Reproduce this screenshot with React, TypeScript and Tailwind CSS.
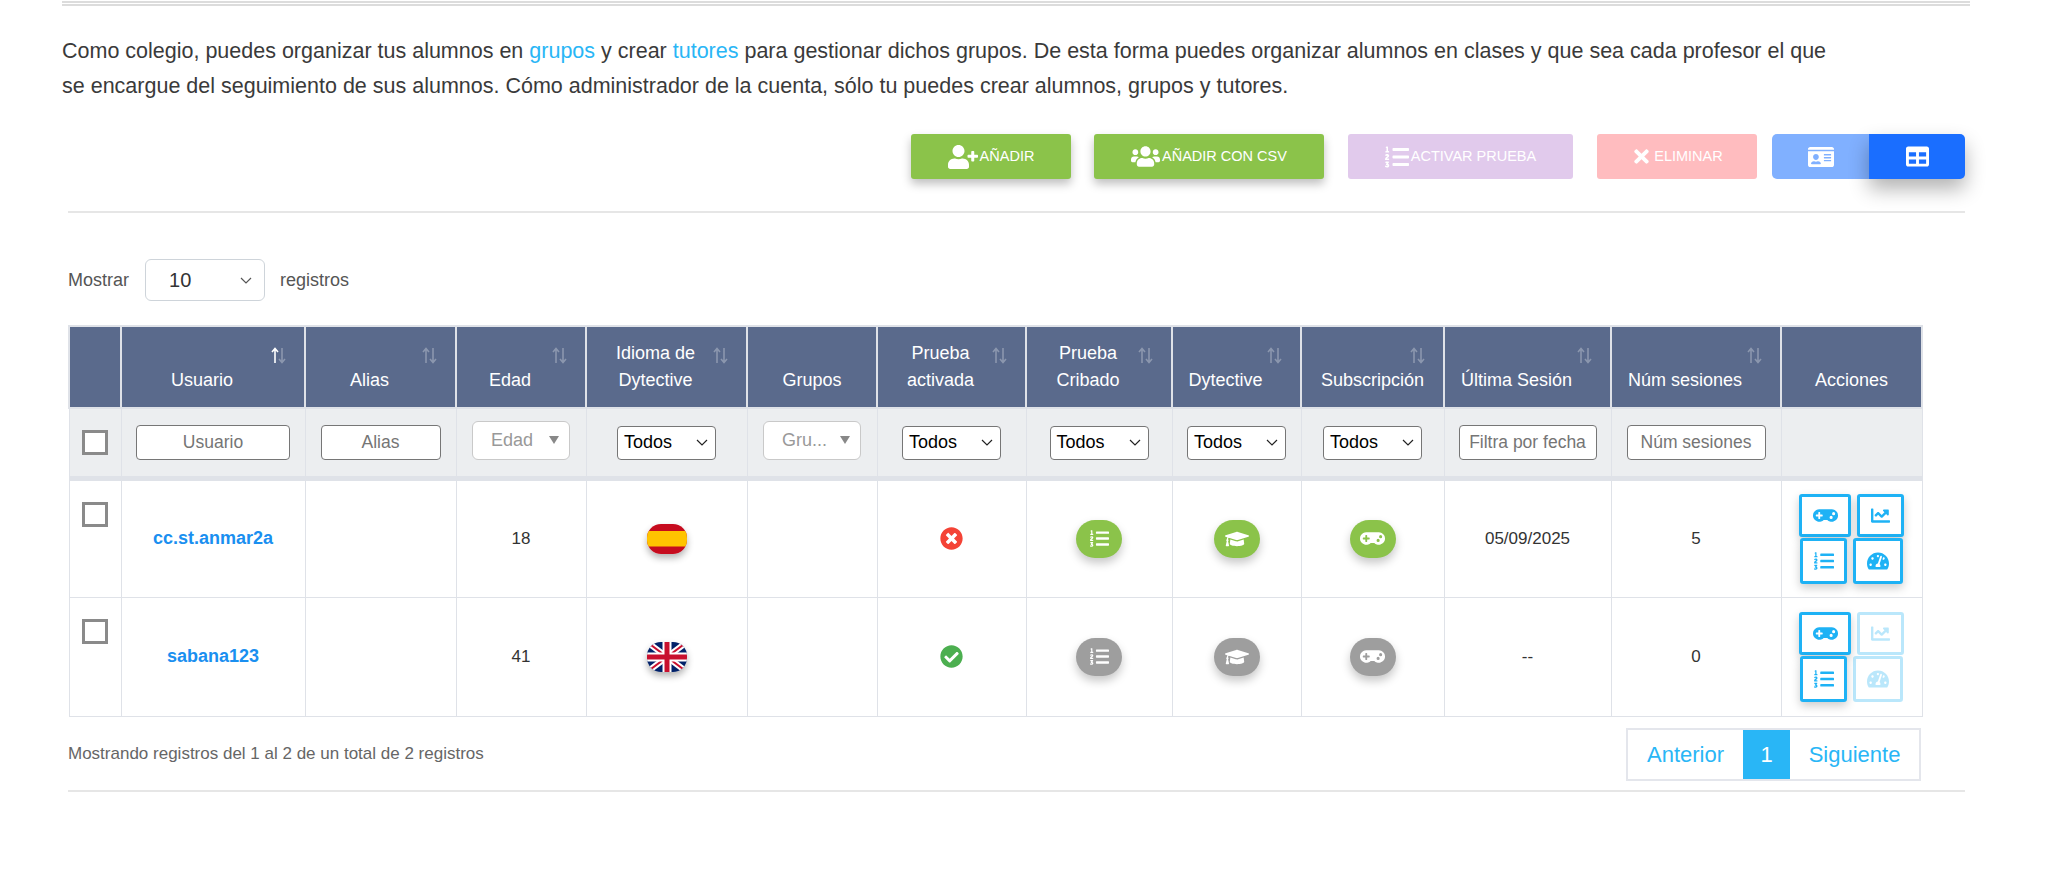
import type { ReactNode } from "react";
import {
  FaChartLine,
  FaCheckCircle,
  FaGamepad,
  FaGraduationCap,
  FaIdCard,
  FaListOl,
  FaTable,
  FaTachometerAlt,
  FaTimes,
  FaTimesCircle,
  FaUserPlus,
  FaUsers,
} from "react-icons/fa";

/* ── Table columns ── */

const COLUMNS = [
  { w: "w-[52px]", label: "", sort: false },
  { w: "w-[184px]", label: "Usuario", sort: true, active: true },
  { w: "w-[151px]", label: "Alias", sort: true },
  { w: "w-[130px]", label: "Edad", sort: true },
  { w: "w-[161px]", label: "Idioma de Dytective", sort: true },
  { w: "w-[130px]", label: "Grupos", sort: false },
  { w: "w-[149px]", label: "Prueba activada", sort: true },
  { w: "w-[146px]", label: "Prueba Cribado", sort: true },
  { w: "w-[129px]", label: "Dytective", sort: true },
  { w: "w-[143px]", label: "Subscripción", sort: true },
  { w: "w-[167px]", label: "Última Sesión", sort: true },
  { w: "w-[170px]", label: "Núm sesiones", sort: true },
  { w: "w-[141px]", label: "Acciones", sort: false },
];

function SortIcon({ active }: { active?: boolean }) {
  return (
    <svg width="15" height="17" viewBox="0 0 15 17" className="absolute right-[18px] top-[20px]">
      <path
        d="M4 16V2M1 5l3-3.5L7 5"
        fill="none"
        stroke="#fff"
        strokeWidth="1.6"
        opacity={active ? 1 : 0.3}
      />
      <path d="M11 1v14M8 12l3 3.5L14 12" fill="none" stroke="#fff" strokeWidth="1.6" opacity="0.3" />
    </svg>
  );
}

function Checkbox() {
  return <span className="block w-[26px] h-[25px] border-[3px] border-[#8a8a8a] bg-white mx-auto" />;
}

function TextFilter({ placeholder, className }: { placeholder: string; className: string }) {
  return (
    <input
      readOnly
      placeholder={placeholder}
      className={`${className} h-[35px] bg-white border border-[#767676] rounded-[4px] text-center text-[17.5px] text-black placeholder:text-[#757575] outline-none mx-auto block`}
    />
  );
}

function NativeSelect() {
  return (
    <div className="w-[99px] h-[34px] mt-[1px] mx-auto flex items-center justify-between bg-white border border-[#767676] rounded-[4px] pl-[6px] pr-[7px] text-[18px] text-black">
      Todos
      <svg width="12" height="7" viewBox="0 0 12 7">
        <path d="M1 1l5 5 5-5" fill="none" stroke="#222" strokeWidth="1.2" />
      </svg>
    </div>
  );
}

function Select2({ label, className }: { label: string; className: string }) {
  return (
    <div
      className={`${className} h-[39px] -mt-[4px] mx-auto flex items-center justify-between bg-white border border-[#c9c9c9] rounded-[6px] pl-[18px] pr-[10px] text-[18px] text-[#999]`}
    >
      {label}
      <span className="w-0 h-0 border-x-[5px] border-x-transparent border-t-[8px] border-t-[#888]" />
    </div>
  );
}

function ToolButton({
  icon,
  label,
  className,
}: {
  icon: ReactNode;
  label: string;
  className: string;
}) {
  return (
    <button
      className={`${className} h-[45px] flex items-center justify-center gap-[2px] rounded-[3px] text-white text-[14.5px] uppercase`}
    >
      {icon}
      {label}
    </button>
  );
}

function Pill({ on, children }: { on: boolean; children: ReactNode }) {
  return (
    <span
      className={`${on ? "bg-[#8bc34a]" : "bg-[#9e9e9e]"} w-[46px] h-[38px] mx-auto rounded-[19px] flex items-center justify-center text-white shadow-[0_5px_10px_rgba(0,0,0,0.22)]`}
    >
      {children}
    </span>
  );
}

function ActionBtn({
  className,
  off,
  children,
}: {
  className: string;
  off?: boolean;
  children: ReactNode;
}) {
  return (
    <span
      className={`${className} ${off ? "opacity-30" : "shadow-[0_4px_10px_rgba(0,0,0,0.2)]"} flex items-center justify-center bg-white border-[3px] border-[#1eb2f5] rounded-[3px] text-[#1eb2f5]`}
    >
      {children}
    </span>
  );
}

function FlagEs() {
  return (
    <svg viewBox="0 0 40 30" width="40" height="30" className="block mx-auto rounded-[14px] shadow-[0_4px_7px_rgba(0,0,0,0.3)]">
      <rect width="40" height="30" fill="#c60b1e" />
      <rect y="7" width="40" height="15.5" fill="#ffc400" />
    </svg>
  );
}

function FlagUk() {
  return (
    <svg viewBox="0 0 40 30" width="40" height="30" className="block mx-auto rounded-[14px] shadow-[0_4px_7px_rgba(0,0,0,0.3)]">
      <rect width="40" height="30" fill="#012169" />
      <path d="M0 0L40 30M40 0L0 30" stroke="#fff" strokeWidth="6" />
      <path d="M0 0L40 30M40 0L0 30" stroke="#c8102e" strokeWidth="2" />
      <path d="M20 0V30M0 15H40" stroke="#fff" strokeWidth="9" />
      <path d="M20 0V30M0 15H40" stroke="#c8102e" strokeWidth="5" />
    </svg>
  );
}

const ROWS = [
  {
    user: "cc.st.anmar2a",
    age: "18",
    flag: <FlagEs />,
    test: <FaTimesCircle size={23} className="text-[#f44336] mx-auto" />,
    on: true,
    last: "05/09/2025",
    sessions: "5",
  },
  {
    user: "sabana123",
    age: "41",
    flag: <FlagUk />,
    test: <FaCheckCircle size={23} className="text-[#4caf50] mx-auto" />,
    on: false,
    last: "--",
    sessions: "0",
  },
];

const TD = "border border-[#dfe2e8] text-center align-middle";

export default function App() {
  return (
    <div className="w-[2048px] h-[875px] overflow-hidden bg-white font-['Liberation_Sans',Arial,sans-serif] text-[18px]">
      <div className="ml-[62px] w-[1908px] mt-px h-[5px] border-y-2 border-[#dcdcdc]" />

      <p className="ml-[62px] mt-[28px] text-[21.5px] leading-[35px] text-[#3a3a3a] whitespace-nowrap">
        Como colegio, puedes organizar tus alumnos en <a className="text-[#29b6f6]">grupos</a> y crear{" "}
        <a className="text-[#29b6f6]">tutores</a> para gestionar dichos grupos. De esta forma puedes organizar alumnos
        en clases y que sea cada profesor el que
        <br />
        se encargue del seguimiento de sus alumnos. Cómo administrador de la cuenta, sólo tu puedes crear alumnos,
        grupos y tutores.
      </p>

      <div className="ml-[68px] w-[1897px]">
        {/* Toolbar */}
        <div className="flex justify-end mt-[30px]">
          <ToolButton
            icon={<FaUserPlus size={30} />}
            label="Añadir"
            className="w-[160px] bg-[#8bc34a] shadow-[0_5px_10px_rgba(0,0,0,0.25)]"
          />
          <ToolButton
            icon={<FaUsers size={29} />}
            label="Añadir con CSV"
            className="w-[230px] ml-[23px] bg-[#8bc34a] shadow-[0_5px_10px_rgba(0,0,0,0.25)]"
          />
          <ToolButton
            icon={<FaListOl size={24} />}
            label="Activar prueba"
            className="w-[225px] ml-[24px] bg-[#e1caec]"
          />
          <ToolButton icon={<FaTimes size={21} />} label="Eliminar" className="w-[160px] ml-[24px] bg-[#ffbcbf]" />
          <div className="flex ml-[15px] rounded-[5px]">
            <button className="w-[97px] h-[45px] flex items-center justify-center rounded-l-[5px] bg-[#80b0ff] text-white">
              <FaIdCard size={26} />
            </button>
            <button className="w-[96px] h-[45px] flex items-center justify-center rounded-r-[5px] bg-[#1a6eff] text-white shadow-[0_10px_20px_rgba(0,0,0,0.3)]">
              <FaTable size={23} />
            </button>
          </div>
        </div>

        <hr className="mt-[32px] border-t-2 border-[#e6e6e6]" />

        {/* Page length */}
        <div className="flex items-center mt-[46px] text-[#555]">
          Mostrar
          <div className="w-[120px] h-[42px] ml-[16px] mr-[15px] flex items-center justify-between pl-[23px] pr-[12px] bg-white border border-[#ced4da] rounded-[6px] text-[20px] text-[#333]">
            10
            <svg width="12" height="7" viewBox="0 0 12 7">
              <path d="M1 1l5 5 5-5" fill="none" stroke="#555" strokeWidth="1.2" />
            </svg>
          </div>
          registros
        </div>

        {/* Students table */}
        <table className="mt-[24px] w-[1853px] table-fixed border-collapse">
          <colgroup>
            {COLUMNS.map((c) => (
              <col key={c.label} className={c.w} />
            ))}
          </colgroup>
          <thead>
            <tr className="h-[82px] bg-[#5a6a8c] text-white">
              {COLUMNS.map((c) => (
                <th
                  key={c.label}
                  className="relative border-2 border-[#dfe2e8] align-bottom font-normal leading-[27px] px-[8px] pb-[13px]"
                >
                  <div className={c.label === "Subscripción" || !c.sort ? "" : "pr-[22px]"}>{c.label}</div>
                  {c.sort && <SortIcon active={c.active} />}
                </th>
              ))}
            </tr>
            <tr className="h-[70px] bg-[#eceef0] border-b-[5px] border-[#dfe2e8]">
              <td className={TD}>
                <Checkbox />
              </td>
              <td className={TD}>
                <TextFilter placeholder="Usuario" className="w-[154px]" />
              </td>
              <td className={TD}>
                <TextFilter placeholder="Alias" className="w-[120px]" />
              </td>
              <td className={TD}>
                <Select2 label="Edad" className="w-[98px]" />
              </td>
              <td className={TD}>
                <NativeSelect />
              </td>
              <td className={TD}>
                <Select2 label="Gru..." className="w-[98px] pl-[12px]" />
              </td>
              <td className={TD}>
                <NativeSelect />
              </td>
              <td className={TD}>
                <NativeSelect />
              </td>
              <td className={TD}>
                <NativeSelect />
              </td>
              <td className={TD}>
                <NativeSelect />
              </td>
              <td className={TD}>
                <TextFilter placeholder="Filtra por fecha" className="w-[138px]" />
              </td>
              <td className={TD}>
                <TextFilter placeholder="Núm sesiones" className="w-[139px]" />
              </td>
              <td className={TD} />
            </tr>
          </thead>
          <tbody>
            {ROWS.map((r) => (
              <tr key={r.user} className="h-[119px] text-[#333]">
                <td className="border border-[#dfe2e8] align-top pt-[21px]">
                  <Checkbox />
                </td>
                <td className={`${TD} font-bold text-[#1a8ff0]`}>{r.user}</td>
                <td className={TD} />
                <td className={`${TD} text-[17px]`}>{r.age}</td>
                <td className={TD}>{r.flag}</td>
                <td className={TD} />
                <td className={TD}>{r.test}</td>
                <td className={TD}>
                  <Pill on={r.on}>
                    <FaListOl size={19} />
                  </Pill>
                </td>
                <td className={TD}>
                  <Pill on={r.on}>
                    <FaGraduationCap size={24} />
                  </Pill>
                </td>
                <td className={TD}>
                  <Pill on={r.on}>
                    <FaGamepad size={25} />
                  </Pill>
                </td>
                <td className={`${TD} text-[17px]`}>{r.last}</td>
                <td className={`${TD} text-[17px]`}>{r.sessions}</td>
                <td className={TD}>
                  <div className="flex flex-wrap justify-center gap-x-[6px] gap-y-px">
                    <ActionBtn className="w-[52px] h-[43px]">
                      <FaGamepad size={25} />
                    </ActionBtn>
                    <ActionBtn className="w-[47px] h-[43px]" off={!r.on}>
                      <FaChartLine size={19} />
                    </ActionBtn>
                    <ActionBtn className="w-[47px] h-[46px]">
                      <FaListOl size={20} />
                    </ActionBtn>
                    <ActionBtn className="w-[50px] h-[46px]" off={!r.on}>
                      <FaTachometerAlt size={22} />
                    </ActionBtn>
                  </div>
                </td>
              </tr>
            ))}
          </tbody>
        </table>

        {/* Footer */}
        <div className="w-[1853px] mt-[11px] flex items-center justify-between">
          <span className="text-[17px] text-[#666]">Mostrando registros del 1 al 2 de un total de 2 registros</span>
          <div className="flex h-[53px] border-2 border-[#e4e6ec] text-[22px] text-[#29b6f6]">
            <a className="w-[115px] flex items-center justify-center">Anterior</a>
            <a className="w-[47px] flex items-center justify-center bg-[#29b6f6] text-white">1</a>
            <a className="w-[129px] flex items-center justify-center">Siguiente</a>
          </div>
        </div>

        <hr className="mt-[9px] border-t-2 border-[#e6e6e6]" />
      </div>
    </div>
  );
}
